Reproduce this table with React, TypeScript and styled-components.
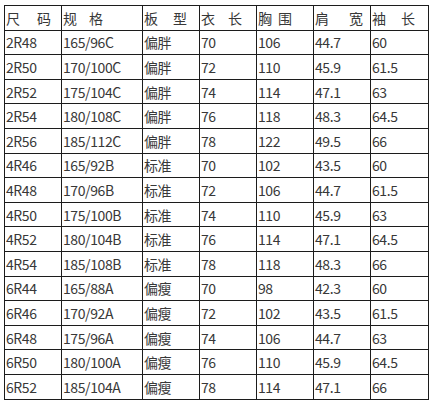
import styled, { createGlobalStyle } from 'styled-components'

const GlobalStyle = createGlobalStyle`
  html, body {
    margin: 0;
    padding: 0;
    background: #ffffff;
  }
`

const Page = styled.div`
  padding: 5px 0 0 4px;
  font-family: "Noto Sans CJK SC", "Microsoft YaHei", sans-serif;
`

const Grid = styled.div`
  display: grid;
  grid-template-columns: 56px 80px 56px 56px 56px 56px 57px;
  grid-auto-rows: 23.6px;
  gap: 1px;
  padding: 1px;
  width: max-content;
  background: #1c1c1c;
`

const Cell = styled.div`
  background: #ffffff;
  display: flex;
  align-items: center;
  padding-left: 1px;
  font-size: 14px;
  color: #383838;
  white-space: nowrap;
  letter-spacing: -0.4px;
`

const HeadLabel = styled.div<{ $gap: number }>`
  display: flex;
  gap: ${(p) => p.$gap}px;
  letter-spacing: 0;
`

const headers: [string, string, number][] = [
  ['尺', '码', 17],
  ['规', '格', 12],
  ['板', '型', 15],
  ['衣', '长', 13],
  ['胸', '围', 6],
  ['肩', '宽', 20],
  ['袖', '长', 15],
]

const rows: string[][] = [
  ['2R48', '165/96C', '偏胖', '70', '106', '44.7', '60'],
  ['2R50', '170/100C', '偏胖', '72', '110', '45.9', '61.5'],
  ['2R52', '175/104C', '偏胖', '74', '114', '47.1', '63'],
  ['2R54', '180/108C', '偏胖', '76', '118', '48.3', '64.5'],
  ['2R56', '185/112C', '偏胖', '78', '122', '49.5', '66'],
  ['4R46', '165/92B', '标准', '70', '102', '43.5', '60'],
  ['4R48', '170/96B', '标准', '72', '106', '44.7', '61.5'],
  ['4R50', '175/100B', '标准', '74', '110', '45.9', '63'],
  ['4R52', '180/104B', '标准', '76', '114', '47.1', '64.5'],
  ['4R54', '185/108B', '标准', '78', '118', '48.3', '66'],
  ['6R44', '165/88A', '偏瘦', '70', '98', '42.3', '60'],
  ['6R46', '170/92A', '偏瘦', '72', '102', '43.5', '61.5'],
  ['6R48', '175/96A', '偏瘦', '74', '106', '44.7', '63'],
  ['6R50', '180/100A', '偏瘦', '76', '110', '45.9', '64.5'],
  ['6R52', '185/104A', '偏瘦', '78', '114', '47.1', '66'],
]

const App = () => {
  return (
    <Page>
      <GlobalStyle />
      <Grid>
        {headers.map(([a, b, gap]) => (
          <Cell key={a + b}>
            <HeadLabel $gap={gap}>
              <span>{a}</span>
              <span>{b}</span>
            </HeadLabel>
          </Cell>
        ))}
        {rows.map((row) =>
          row.map((value, i) => <Cell key={row[0] + i}>{value}</Cell>)
        )}
      </Grid>
    </Page>
  )
}

export default App
